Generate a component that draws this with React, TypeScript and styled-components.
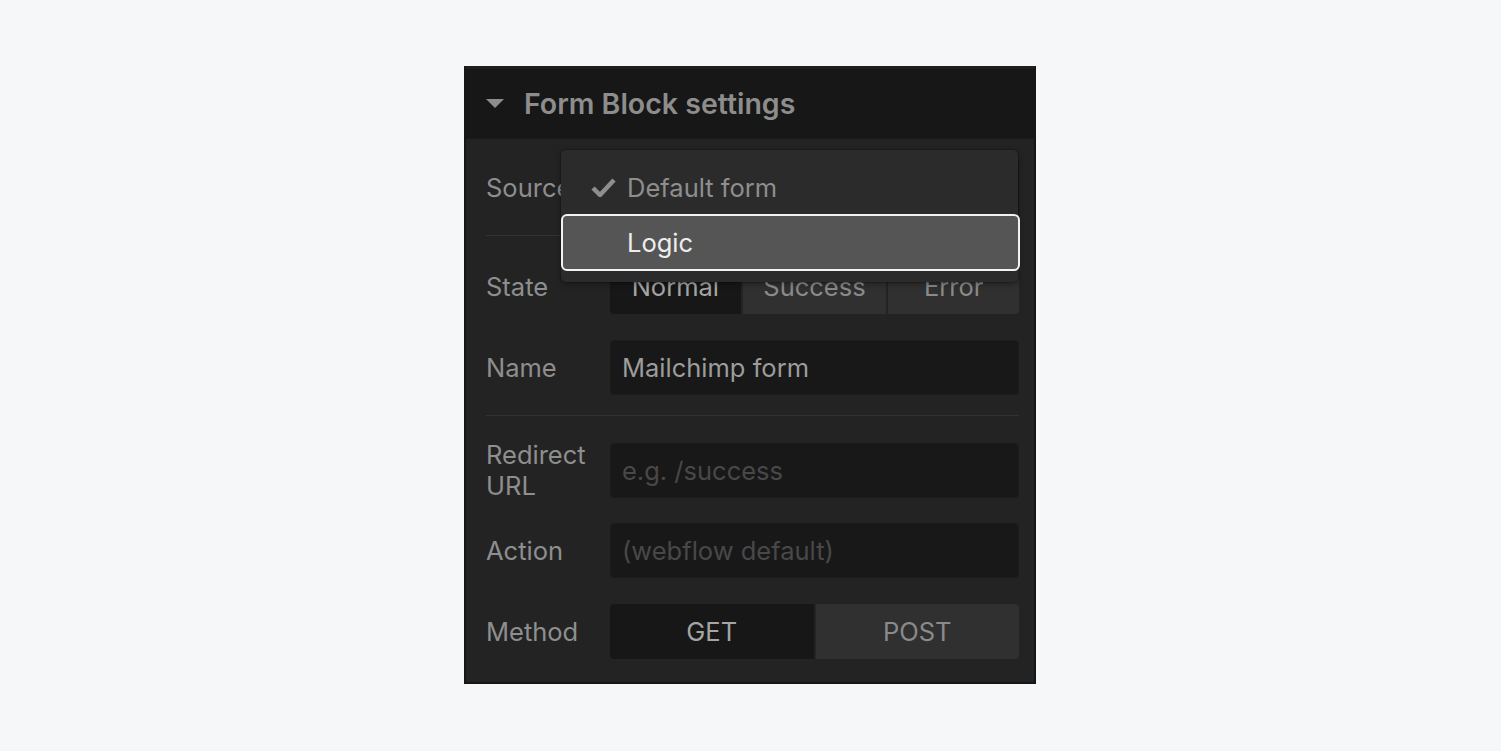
import React from 'react'
import styled, { createGlobalStyle } from 'styled-components'

const GlobalStyle = createGlobalStyle`
  html, body {
    margin: 0;
    padding: 0;
    background: #f6f7f9;
    font-family: Inter, 'Noto Sans', sans-serif;
  }
`

const Page = styled.div`
  width: 1501px;
  height: 751px;
  display: flex;
  padding: 66px 0 0 464px;
  box-sizing: border-box;
`

const Panel = styled.div`
  position: relative;
  width: 572px;
  height: 618px;
  box-sizing: border-box;
  background: #232323;
  border: 2px solid #161616;
  border-top: 3px solid #1f1f1f;
  display: flex;
  flex-direction: column;
`

const Header = styled.div`
  flex-shrink: 0;
  height: 69px;
  display: flex;
  align-items: center;
  gap: 20px;
  padding-left: 20px;
  background: #171717;
  border-bottom: 1px solid #1a1a1a;
  color: #8d8d8d;
  font-size: 28.5px;
  font-weight: 600;
`

const Caret = styled.span`
  width: 0;
  height: 0;
  border-left: 9px solid transparent;
  border-right: 9px solid transparent;
  border-top: 9px solid #8d8d8d;
`

const Body = styled.div`
  padding: 21px 15px 0 20px;
  display: flex;
  flex-direction: column;
`

const Row = styled.div<{ $gap?: number }>`
  display: grid;
  grid-template-columns: 124px 1fr;
  align-items: center;
  margin-bottom: ${(p) => p.$gap ?? 26}px;
`

const Label = styled.div`
  color: #8e8e8e;
  font-size: 25.5px;
  line-height: 31px;
`

const Divider = styled.div`
  height: 1px;
  background: #333333;
  margin: 20px 0 23px;
`

const Field = styled.div<{ $placeholder?: boolean }>`
  height: 55px;
  box-sizing: border-box;
  border-radius: 4px;
  background: #181818;
  border: 1px solid #1c1c1c;
  display: flex;
  align-items: center;
  padding-left: 11px;
  font-size: 25.5px;
  color: ${(p) => (p.$placeholder ? '#484848' : '#9c9c9c')};
`

const Segmented = styled.div`
  height: 55px;
  display: flex;
  gap: 2px;
  border-radius: 4px;
  overflow: hidden;
  background: #232323;
`

const Segment = styled.div<{ $active?: boolean; $grow: number }>`
  flex: ${(p) => p.$grow};
  display: flex;
  align-items: center;
  justify-content: center;
  font-size: 25.5px;
  background: ${(p) => (p.$active ? '#171717' : '#303030')};
  color: ${(p) => (p.$active ? '#a5a5a5' : '#8a8a8a')};
`

const Menu = styled.div`
  position: absolute;
  top: 81px;
  left: 95px;
  width: 457px;
  padding: 10px 0 11px;
  background: #2b2b2b;
  border-radius: 5px;
  box-shadow: 0 2px 6px rgba(0, 0, 0, 0.35), 0 0 0 1px rgba(0, 0, 0, 0.15);
  z-index: 2;
`

const MenuItem = styled.div<{ $selected?: boolean }>`
  height: ${(p) => (p.$selected ? 57 : 54)}px;
  box-sizing: border-box;
  display: flex;
  align-items: center;
  gap: 10px;
  padding-left: 28px;
  font-size: 25.5px;
  margin-right: -2px;
  border-radius: 6px;
  border: 2px solid ${(p) => (p.$selected ? '#f2f2f2' : 'transparent')};
  background: ${(p) => (p.$selected ? '#555555' : 'transparent')};
  color: ${(p) => (p.$selected ? '#ededed' : '#8e8e8e')};
`

const CheckSlot = styled.span`
  width: 26px;
  display: flex;
  align-items: center;
`

const Check = () => (
  <svg width='25' height='20' viewBox='0 0 25 20'>
    <path d='M2 11 L9 18 L23 3' fill='none' stroke='#8e8e8e' strokeWidth='4.5' strokeLinejoin='round' />
  </svg>
)

export default function App() {
  return (
    <>
      <GlobalStyle />
      <Page>
        <Panel>
          <Header>
            <Caret />
            Form Block settings
          </Header>
          <Body>
            <Row $gap={0}>
              <Label>Source</Label>
              <Field>Logic</Field>
            </Row>
            <Divider />
            <Row>
              <Label>State</Label>
              <Segmented>
                <Segment $active $grow={131}>Normal</Segment>
                <Segment $grow={144}>Success</Segment>
                <Segment $grow={131}>Error</Segment>
              </Segmented>
            </Row>
            <Row $gap={0}>
              <Label>Name</Label>
              <Field>Mailchimp form</Field>
            </Row>
            <Divider />
            <Row $gap={22}>
              <Label>
                Redirect
                <br />
                URL
              </Label>
              <Field $placeholder>e.g. /success</Field>
            </Row>
            <Row>
              <Label>Action</Label>
              <Field $placeholder>(webflow default)</Field>
            </Row>
            <Row>
              <Label>Method</Label>
              <Segmented>
                <Segment $active $grow={1}>GET</Segment>
                <Segment $grow={1}>POST</Segment>
              </Segmented>
            </Row>
          </Body>
          <Menu>
            <MenuItem>
              <CheckSlot>
                <Check />
              </CheckSlot>
              Default form
            </MenuItem>
            <MenuItem $selected>
              <CheckSlot />
              Logic
            </MenuItem>
          </Menu>
        </Panel>
      </Page>
    </>
  )
}
